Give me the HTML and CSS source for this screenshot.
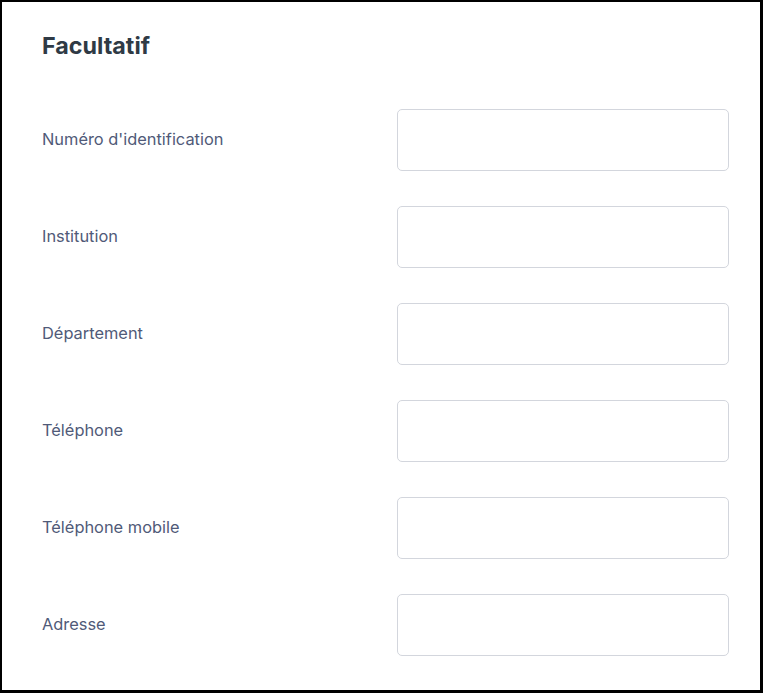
FILE: index.html
```html
<!DOCTYPE html>
<html lang="fr">
<head>
<meta charset="utf-8">
<link rel="stylesheet" href="styles.css">
</head>
<body>
<div class="panel">
  <h2 class="title">Facultatif</h2>
  <div class="form">
    <label class="label" for="f1">Numéro d'identification</label>
    <input class="field" id="f1" type="text">
    <label class="label" for="f2">Institution</label>
    <input class="field" id="f2" type="text">
    <label class="label" for="f3">Département</label>
    <input class="field" id="f3" type="text">
    <label class="label" for="f4">Téléphone</label>
    <input class="field" id="f4" type="text">
    <label class="label" for="f5">Téléphone mobile</label>
    <input class="field" id="f5" type="text">
    <label class="label" for="f6">Adresse</label>
    <input class="field" id="f6" type="text">
  </div>
</div>
</body>
</html>
```
FILE: styles.css
```css
html, body {
  margin: 0;
  padding: 0;
  background: #ffffff;
}
.panel {
  box-sizing: border-box;
  width: 763px;
  height: 693px;
  border-style: solid;
  border-color: #000000;
  border-width: 2px 3px 3px 2px;
  padding: 0 31px 0 40px;
  font-family: Inter, "Noto Sans", sans-serif;
  overflow: hidden;
}
.title {
  margin: 0;
  padding-top: 29px;
  font-size: 23.3px;
  line-height: 30px;
  font-weight: 700;
  color: #2f3a45;
}
.form {
  display: grid;
  grid-template-columns: 355px 332px;
  grid-auto-rows: 62px;
  row-gap: 35px;
  margin-top: 48px;
  align-items: center;
}
.label {
  font-size: 16.4px;
  line-height: 20px;
  padding-bottom: 2px;
  color: #505a78;
}
.field {
  box-sizing: border-box;
  width: 332px;
  height: 62px;
  margin: 0;
  border: 1px solid #d3d6dd;
  border-radius: 5px;
  background: #ffffff;
  outline: none;
}
```
